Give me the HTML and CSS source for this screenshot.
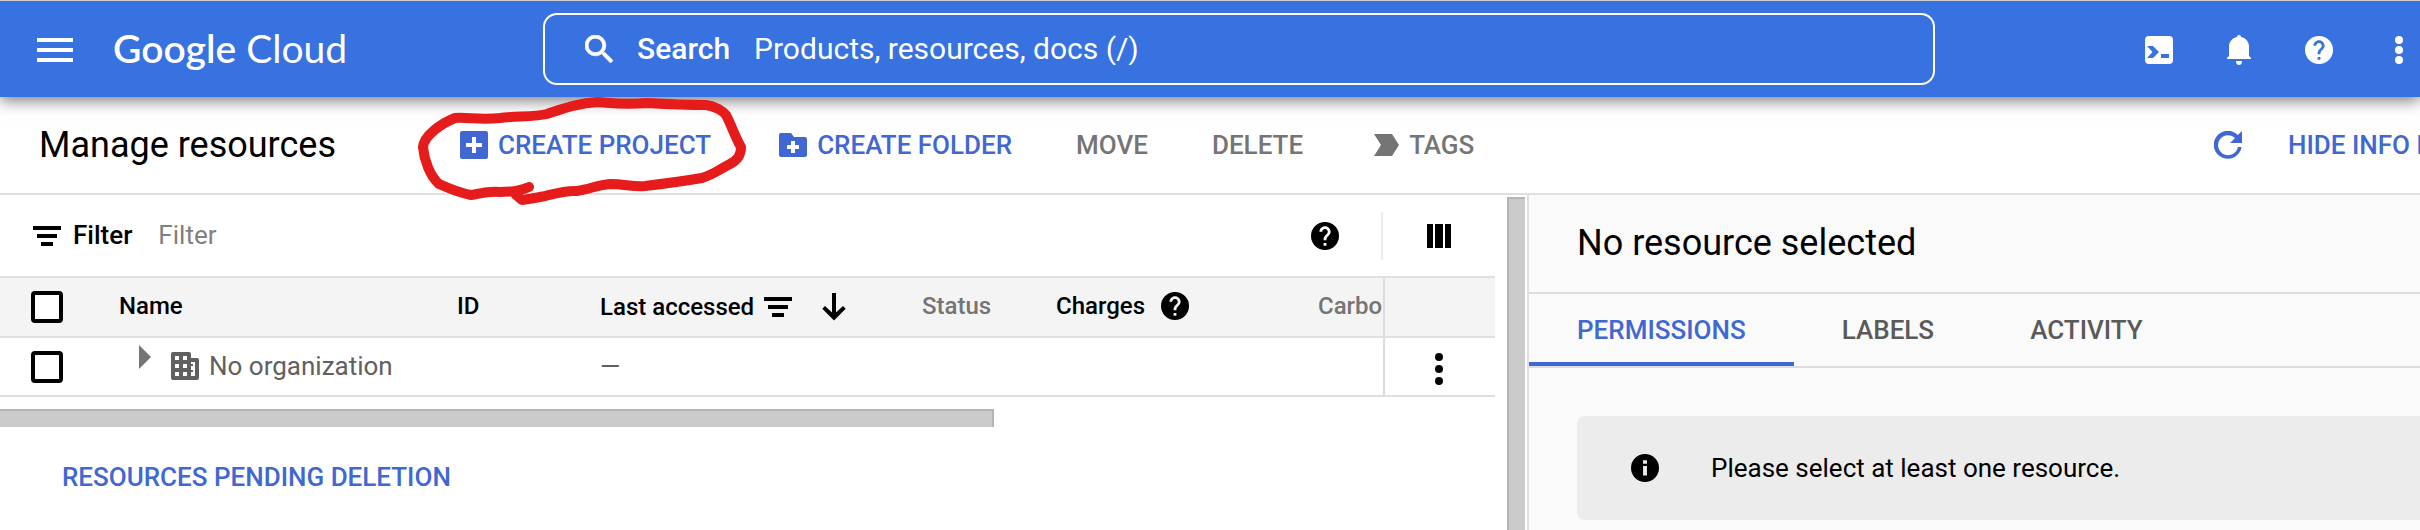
FILE: index.html
```html
<!DOCTYPE html>
<html lang="en">
<head>
<meta charset="utf-8">
<title>Manage resources - Google Cloud</title>
<link rel="stylesheet" href="styles.css">
</head>
<body>
<header class="topbar">
  <button class="icon-btn menu-btn" aria-label="Navigation menu">
    <svg width="36" height="24" viewBox="0 0 36 24"><path d="M0 0h36v4H0zM0 10h36v4H0zM0 20h36v4H0z"/></svg>
  </button>
  <a class="logo" href="#"><span class="logo-strong">Google</span> <span>Cloud</span></a>
  <form class="search">
    <svg width="28" height="28" viewBox="3 3 17.5 17.5"><path d="M15.5 14h-.79l-.28-.27A6.471 6.471 0 0 0 16 9.500 6.500 6.500 0 1 0 9.500 16c1.610 0 3.090-.59 4.230-1.570l.27.280v.79l5 4.990L20.490 19l-4.990-5zm-6 0C7.010 14 5 11.990 5 9.500S7.010 5 9.500 5 14 7.010 14 9.500 11.990 14 9.500 14z" stroke="#fff" stroke-width=".5"/></svg>
    <label for="search">Search</label>
    <input id="search" type="text" placeholder="Products, resources, docs (/)">
  </form>
  <nav class="top-actions" aria-label="Account tools">
    <button class="icon-btn" aria-label="Activate Cloud Shell">
      <svg width="28" height="28" viewBox="0 0 28 28"><path fill-rule="evenodd" d="M4 0h20a4 4 0 0 1 4 4v20a4 4 0 0 1-4 4H4a4 4 0 0 1-4-4V4a4 4 0 0 1 4-4zM2 10l5.500 6L2 22h6l6-6-6-6zM16 18v4h8v-4z"/></svg>
    </button>
    <button class="icon-btn" aria-label="Notifications">
      <svg width="24" height="30" viewBox="0 0 24 30"><path d="M12 0c-1.300 0-2 .8-2 2C5 3 2 7 2 11.500V21l-2 2v1h24v-1l-2-2v-9.500C22 7 19 3 14 2c0-1.200-.7-2-2-2zM9 26h6a3 4 0 0 1-6 0z"/></svg>
    </button>
    <button class="icon-btn" aria-label="Help">
      <svg width="28" height="28" viewBox="2 2 20 20"><path d="M12 2a10 10 0 1 0 0 20 10 10 0 0 0 0-20zm1 17h-2v-2h2v2zm2.070-7.750l-.9.920C13.450 12.900 13 13.500 13 15h-2v-.5c0-1.100.45-2.100 1.170-2.830l1.240-1.260c.37-.36.590-.86.590-1.410 0-1.100-.9-2-2-2s-2 .9-2 2H8c0-2.210 1.790-4 4-4s4 1.790 4 4c0 .88-.36 1.680-.93 2.250z"/></svg>
    </button>
    <button class="icon-btn" aria-label="Settings and utilities">
      <svg width="8" height="28" viewBox="0 0 8 28"><circle cx="4" cy="4" r="4"/><circle cx="4" cy="14" r="4"/><circle cx="4" cy="24" r="4"/></svg>
    </button>
  </nav>
</header>

<div class="toolbar">
  <h1>Manage resources</h1>
  <button class="action create-project">
    <svg width="28" height="28" viewBox="0 0 28 28"><path fill-rule="evenodd" d="M2 0h24a2 2 0 0 1 2 2v24a2 2 0 0 1-2 2H2a2 2 0 0 1-2-2V2a2 2 0 0 1 2-2zM12 6v6H6v4h6v6h4v-6h6v-4h-6V6z"/></svg>
    CREATE PROJECT
  </button>
  <button class="action">
    <svg width="28" height="24" viewBox="0 0 28 24"><path fill-rule="evenodd" d="M2 0h10l3 4h11a2 2 0 0 1 2 2v16a2 2 0 0 1-2 2H2a2 2 0 0 1-2-2V2a2 2 0 0 1 2-2zM12 8v4H8v4h4v4h4v-4h4v-4h-4V8z"/></svg>
    CREATE FOLDER
  </button>
  <button class="action muted">MOVE</button>
  <button class="action muted">DELETE</button>
  <button class="action muted tags">
    <svg width="25" height="22" viewBox="0 0 25 22"><path d="M0 0h18l7 11-7 11H0l7-11z"/></svg>
    TAGS
  </button>
  <button class="action refresh" aria-label="Refresh">
    <svg width="28" height="28" viewBox="0 0 28 28"><path d="M23.900 4.100A14 14 0 1 0 27.600 16h-3.700A10 10 0 1 1 21 7l-5 5h12V0z"/></svg>
  </button>
  <button class="action hide-info">HIDE INFO PANEL</button>
</div>

<div class="workspace">
  <main class="resources">
    <div class="content">
      <div class="filter-bar">
        <svg width="28" height="20" viewBox="0 0 28 20"><path d="M0 0h28v4H0zM4 8h20v4H4zM8 16h12v4H8z"/></svg>
        <label for="filter">Filter</label>
        <input id="filter" type="text" placeholder="Filter">
        <button class="icon-btn" aria-label="Filter help">
          <svg width="28" height="28" viewBox="2 2 20 20"><path d="M12 2a10 10 0 1 0 0 20 10 10 0 0 0 0-20zm1 17h-2v-2h2v2zm2.070-7.750l-.9.920C13.450 12.900 13 13.500 13 15h-2v-.5c0-1.100.45-2.100 1.170-2.830l1.240-1.260c.37-.36.590-.86.590-1.410 0-1.100-.9-2-2-2s-2 .9-2 2H8c0-2.210 1.790-4 4-4s4 1.790 4 4c0 .88-.36 1.680-.93 2.250z"/></svg>
        </button>
        <div class="column-picker">
          <button class="icon-btn" aria-label="Column display options">
            <svg width="24" height="24" viewBox="0 0 24 24"><path d="M0 0h6v24H0zM8 0h8v24H8zM18 0h6v24h-6z"/></svg>
          </button>
        </div>
      </div>

      <table class="grid">
        <colgroup>
          <col class="c-check"><col class="c-name"><col class="c-id"><col class="c-last"><col class="c-status"><col class="c-charges"><col class="c-carbon"><col class="c-menu">
        </colgroup>
        <thead>
          <tr>
            <th class="check"><input type="checkbox" aria-label="Select all"></th>
            <th>Name</th>
            <th>ID</th>
            <th>
              <span class="sortable">Last accessed
                <svg width="28" height="20" viewBox="0 0 28 20"><path d="M0 0h28v4H0zM4 8h20v4H4zM8 16h12v4H8z"/></svg>
                <svg class="sort-arrow" width="24" height="28" viewBox="0 0 24 28"><path d="M10 0h4v19.500l7-6.500 2.700 2.800L12 27.500.3 15.800 3 13l7 6.500z"/></svg>
              </span>
            </th>
            <th class="dim">Status</th>
            <th>
              <span class="with-help">Charges
                <svg width="28" height="28" viewBox="2 2 20 20"><path d="M12 2a10 10 0 1 0 0 20 10 10 0 0 0 0-20zm1 17h-2v-2h2v2zm2.070-7.750l-.9.920C13.450 12.900 13 13.500 13 15h-2v-.5c0-1.100.45-2.100 1.170-2.830l1.240-1.260c.37-.36.590-.86.590-1.410 0-1.100-.9-2-2-2s-2 .9-2 2H8c0-2.210 1.790-4 4-4s4 1.790 4 4c0 .88-.36 1.680-.93 2.250z"/></svg>
              </span>
            </th>
            <th class="dim">Carbo</th>
            <th class="menu"></th>
          </tr>
        </thead>
        <tbody>
          <tr>
            <td class="check"><input type="checkbox" aria-label="Select No organization"></td>
            <td colspan="2">
              <div class="org">
                <button class="icon-btn expander" aria-label="Expand">
                  <svg width="12" height="24" viewBox="0 0 12 24"><path d="M0 0l12 12L0 24z"/></svg>
                </button>
                <svg width="28" height="28" viewBox="0 0 28 28"><path fill-rule="evenodd" d="M2 0h16a2 2 0 0 1 2 2v4h6a2 2 0 0 1 2 2v18a2 2 0 0 1-2 2H2a2 2 0 0 1-2-2V2a2 2 0 0 1 2-2zM4 4v4h4V4zM12 4v4h4V4zM4 12v4h4v-4zM12 12v4h4v-4zM4 20v4h4v-4zM12 20v4h4v-4zM20 10v2h2v2h-2v4h2v2h-2v4h4V10z"/></svg>
                No organization
              </div>
            </td>
            <td>—</td>
            <td></td>
            <td></td>
            <td></td>
            <td class="menu">
              <button class="icon-btn" aria-label="Row actions">
                <svg width="8" height="32" viewBox="0 0 8 32"><circle cx="4" cy="4" r="4"/><circle cx="4" cy="16" r="4"/><circle cx="4" cy="28" r="4"/></svg>
              </button>
            </td>
          </tr>
        </tbody>
      </table>
      <div class="h-scroll"><div class="h-thumb"></div></div>
      <a class="pending" href="#">RESOURCES PENDING DELETION</a>
    </div>
    <div class="v-scroll"><div class="v-thumb"></div></div>
  </main>

  <aside class="info">
    <h2>No resource selected</h2>
    <div class="tabs" role="tablist">
      <button class="tab active" role="tab" aria-selected="true">PERMISSIONS</button>
      <button class="tab" role="tab" aria-selected="false">LABELS</button>
      <button class="tab" role="tab" aria-selected="false">ACTIVITY</button>
    </div>
    <div class="notice">
      <svg width="28" height="28" viewBox="2 2 20 20"><path d="M12 2a10 10 0 1 0 0 20 10 10 0 0 0 0-20zm1.400 15.400h-2.800v-6.800h2.800v6.800zm0-8.400h-2.800V6.400h2.800V9z"/></svg>
      <p>Please select at least one resource.</p>
    </div>
  </aside>
</div>

<svg class="marker" width="330" height="110" viewBox="418 96 330 110" aria-hidden="true">
  <path d="M529 187C520 191 510 192 500 192C484 191 480 194 471 195C460 193 448 188 439 184C430 176 424 160 423 147C424 136 440 124 455 118C467 117 480 120 500 118C515 116 535 117 547 114C562 109 578 103 598 102C612 103 622 105 647 103C665 104 690 105 706 105C715 106 723 111 726 115C731 124 735 137 741 147C741 155 738 160 730 164C720 169 715 174 702 178C684 181 662 184 645 186C632 187 625 184 610 184C598 185 590 189 577 191C565 190 550 195 540 197C530 199 522 200 522 200L516 195"/>
</svg>
</body>
</html>
```
FILE: styles.css
```css
* { box-sizing: border-box; }

body {
  margin: 0;
  min-height: 100vh;
  display: flex;
  flex-direction: column;
  overflow: hidden;
  background: #fff;
  color: #000;
  font: 400 26px/32px Roboto, "Liberation Sans", sans-serif;
  white-space: nowrap;
}

button {
  border: 0;
  padding: 0;
  background: none;
  color: inherit;
  font: inherit;
  cursor: pointer;
}

input[type="text"] {
  flex: 1;
  min-width: 0;
  border: 0;
  padding: 0;
  outline: 0;
  background: none;
  color: inherit;
  font: inherit;
}

svg { display: block; flex: none; fill: currentColor; }
a { text-decoration: none; }
h1, h2, p { margin: 0; font-weight: 400; }
.icon-btn { display: flex; align-items: center; justify-content: center; }

/* Top bar */
.topbar {
  position: relative;
  flex: none;
  display: flex;
  align-items: center;
  height: 97px;
  padding: 0 17px 0 37px;
  border-top: 1px solid #ccc;
  background: #3871e0;
  color: #fff;
  box-shadow: 0 4px 14px rgba(0, 0, 0, .5);
}
.menu-btn { padding-top: 2px; }

.logo {
  flex: none;
  width: 430px;
  margin-left: 40px;
  padding-bottom: 2px;
  color: #fff;
  font: 400 39px/48px Lato, sans-serif;
}
.logo-strong { font-weight: 600; }

.search {
  flex: 1;
  display: flex;
  align-items: center;
  height: 72px;
  padding-left: 40px;
  border: 2px solid #fff;
  border-radius: 14px;
  font-size: 30px;
}
.search label { margin: 0 24px; font-weight: 500; }
.search input::placeholder { color: #fff; opacity: 1; }

.top-actions { display: flex; gap: 52px; margin-left: 210px; padding-top: 2px; }
.top-actions .icon-btn { min-width: 28px; }
.top-actions .icon-btn:last-child { min-width: 8px; margin-left: 10px; }

/* Page toolbar */
.toolbar {
  flex: none;
  display: flex;
  align-items: center;
  height: 98px;
  padding-left: 39px;
  border-bottom: 2px solid #e0e0e0;
}
.toolbar h1 { width: 421px; font-size: 36px; line-height: 48px; }

.action {
  display: flex;
  align-items: center;
  gap: 10px;
  color: #4067d2;
  font-weight: 500;
}
.action + .action { margin-left: 68px; }
.action + .action.muted { margin-left: 64px; color: #757575; }
.action + .action.tags { margin-left: 71px; }
.toolbar .action.refresh { margin-left: auto; }
.toolbar .action.hide-info { width: 132px; margin-left: 46px; }

/* Two panes */
.workspace { flex: 1; display: flex; }
.resources { flex: 1; min-width: 0; display: flex; }
.content { flex: 1; min-width: 0; }

.v-scroll { width: 32px; padding: 2px 2px 0 12px; }
.v-thumb {
  height: 100%;
  border-top: 2px solid #b5b5b5;
  border-left: 2px solid #b5b5b5;
  background: #cbcbcb;
}

.filter-bar {
  display: flex;
  align-items: center;
  height: 81px;
  padding-left: 33px;
}
.filter-bar label { margin: 0 26px 2px 12px; font-weight: 500; }
.filter-bar input { margin-bottom: 2px; }
.filter-bar input::placeholder { color: #808080; opacity: 1; }
.column-picker {
  display: flex;
  align-items: center;
  justify-content: center;
  width: 114px;
  height: 48px;
  margin-left: 42px;
  border-left: 2px solid #ebebeb;
}

/* Resource table */
.grid {
  width: 100%;
  table-layout: fixed;
  border-collapse: separate;
  border-spacing: 0;
  border-top: 2px solid #e0e0e0;
}
.c-check { width: 95px; }
.c-id { width: 143px; }
.c-last { width: 322px; }
.c-status { width: 134px; }
.c-charges { width: 262px; }
.c-carbon { width: 89px; }
.c-menu { width: 112px; }

.grid th, .grid td {
  height: 60px;
  padding: 0 0 2px 24px;
  border-bottom: 2px solid #e0e0e0;
  text-align: left;
  color: #606060;
}
.grid td { height: 59px; }
.grid th {
  background: #f4f4f4;
  color: #000;
  font-size: 24px;
  font-weight: 500;
}
.grid th.dim { color: #757575; }
.grid .check { padding: 0 0 0 31px; }
.grid .menu { padding: 4px 2px 0 0; border-left: 2px solid #dcdcdc; color: #000; }
.menu .icon-btn { margin: 0 auto; }

.grid input {
  display: block;
  appearance: none;
  width: 32px;
  height: 32px;
  margin: 0;
  border: 4px solid #000;
  border-radius: 4px;
  background: #fff;
}

.sortable, .with-help, .org { display: flex; align-items: center; }
.sortable { gap: 10px; padding-top: 2px; }
.sort-arrow { margin-left: 20px; }
.with-help { gap: 16px; }
.org { gap: 10px; padding-left: 20px; }
.expander { margin-right: 10px; padding-bottom: 18px; color: #757575; }

.h-scroll { padding-top: 12px; }
.h-thumb {
  width: 66.5%;
  height: 18px;
  border-top: 2px solid #b5b5b5;
  border-right: 2px solid #b5b5b5;
  background: #cbcbcb;
}
.pending {
  display: inline-block;
  margin: 34px 62px;
  color: #4067d2;
  font-weight: 500;
}

/* Info panel */
.info {
  flex: none;
  width: 893px;
  border-left: 2px solid #e0e0e0;
  background: #fafafa;
}
.info h2 {
  padding: 24px 48px 25px;
  border-bottom: 2px solid #dcdcdc;
  font-size: 36px;
  line-height: 48px;
}
.tabs { display: flex; border-bottom: 2px solid #dcdcdc; }
.tab {
  height: 72px;
  padding: 4px 48px 0;
  border-bottom: 4px solid transparent;
  color: #5a5a5a;
  font-weight: 500;
}
.tab.active { border-color: #4067d2; color: #4067d2; }
.notice {
  display: flex;
  align-items: center;
  gap: 52px;
  height: 104px;
  margin: 48px 0 0 48px;
  padding-left: 54px;
  border-radius: 8px 0 0 8px;
  background: #ececec;
}

/* Hand-drawn highlight over the toolbar */
.marker {
  position: absolute;
  top: 96px;
  left: 418px;
  pointer-events: none;
}
.marker path {
  fill: none;
  stroke: #e61c1c;
  stroke-width: 10;
  stroke-linecap: round;
  stroke-linejoin: round;
}
```
